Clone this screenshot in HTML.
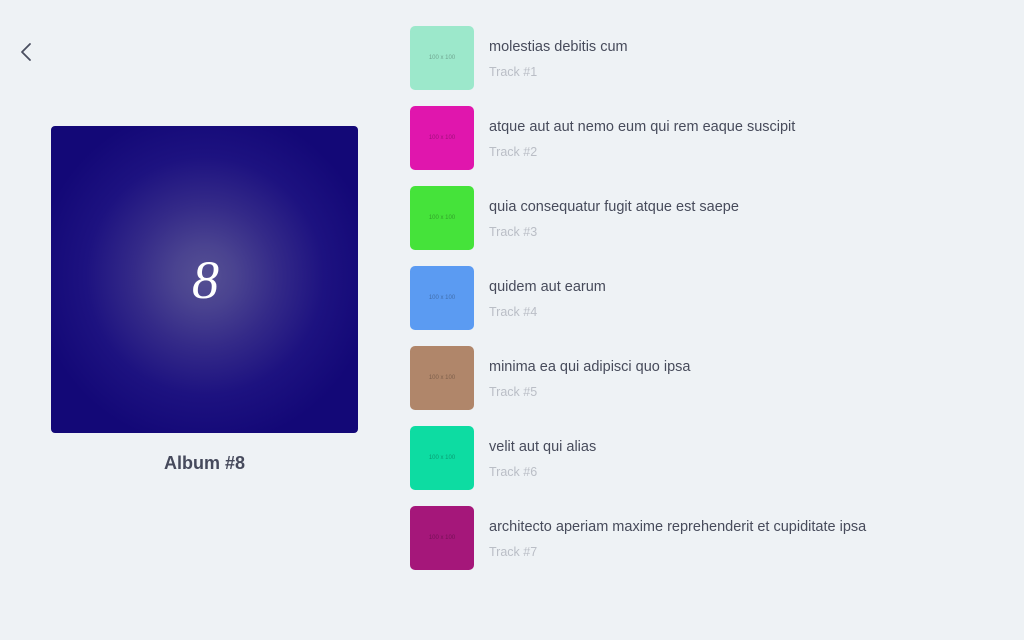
<!DOCTYPE html>
<html><head><meta charset="utf-8"><style>
*{margin:0;padding:0;box-sizing:border-box}
body{width:1024px;height:640px;background:#eef2f5;font-family:"Liberation Sans",sans-serif;position:relative;overflow:hidden}
.back{position:absolute;left:18px;top:41px}
.album{position:absolute;left:51px;top:126px;width:307px;height:307px;border-radius:4px;
background:radial-gradient(circle 170px at 154px 150px,#555093 0%,#4a4390 18%,#342a88 42%,#1d1280 70%,#130877 100%)}
.num{position:absolute;left:0;right:0;top:124px;text-align:center;color:#fff;font-family:"Liberation Serif",serif;font-style:italic;font-size:54px;line-height:60px;padding-left:2px}
.cap{position:absolute;left:51px;width:307px;top:453px;text-align:center;font-weight:bold;font-size:18px;color:#464a5c}
.tr{position:absolute;left:410px;height:64px}
.th{position:absolute;left:0;top:0;width:64px;height:64px;border-radius:5px;font-size:6px;color:rgba(0,0,0,.3);display:flex;align-items:center;justify-content:center}
.t{position:absolute;left:79px;top:13px;font-size:14.5px;color:#474b5b;white-space:nowrap}
.s{position:absolute;left:79px;top:39px;font-size:12.5px;color:#babec6;white-space:nowrap}
</style></head><body>
<svg class="back" width="16" height="22" viewBox="0 0 16 22"><path d="M12 3 L4 11 L12 19" fill="none" stroke="#4a4e60" stroke-width="1.8" stroke-linecap="round" stroke-linejoin="round"/></svg>
<div class="album"><div class="num">8</div></div>
<div class="cap">Album #8</div>

<div class="tr" style="top:26px"><div class="th" style="background:#9ce8cb">100 x 100</div><div class="t">molestias debitis cum</div><div class="s">Track #1</div></div>
<div class="tr" style="top:106px"><div class="th" style="background:#e016ad">100 x 100</div><div class="t">atque aut aut nemo eum qui rem eaque suscipit</div><div class="s">Track #2</div></div>
<div class="tr" style="top:186px"><div class="th" style="background:#45e33a">100 x 100</div><div class="t">quia consequatur fugit atque est saepe</div><div class="s">Track #3</div></div>
<div class="tr" style="top:266px"><div class="th" style="background:#5b9bf2">100 x 100</div><div class="t">quidem aut earum</div><div class="s">Track #4</div></div>
<div class="tr" style="top:346px"><div class="th" style="background:#b0866a">100 x 100</div><div class="t">minima ea qui adipisci quo ipsa</div><div class="s">Track #5</div></div>
<div class="tr" style="top:426px"><div class="th" style="background:#0ddca2">100 x 100</div><div class="t">velit aut qui alias</div><div class="s">Track #6</div></div>
<div class="tr" style="top:506px"><div class="th" style="background:#a5177a">100 x 100</div><div class="t">architecto aperiam maxime reprehenderit et cupiditate ipsa</div><div class="s">Track #7</div></div>
</body></html>
